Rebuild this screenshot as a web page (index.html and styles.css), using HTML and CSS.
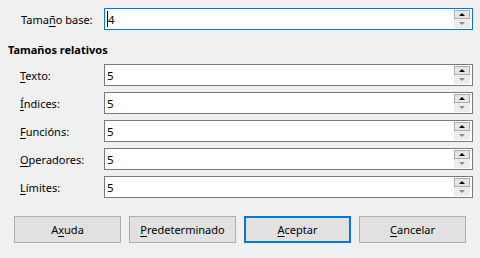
FILE: index.html
```html
<!DOCTYPE html>
<html lang="gl">
<head>
    <meta charset="UTF-8">
    <title>Tamaños de letra</title>
    <link rel="stylesheet" href="styles.css">
</head>
<body>
    <div class="dialog">
        <div class="field-row base-row">
            <label>Tama<u>ñ</u>o base:</label>
            <div class="spin focused">
                <span class="value"><span class="caret"></span>4</span>
                <div class="arrows">
                    <span class="arrow up"></span>
                    <span class="arrow down"></span>
                </div>
            </div>
        </div>

        <h2>Tamaños relativos</h2>

        <div class="rows">
            <div class="field-row">
                <label><u>T</u>exto:</label>
                <div class="spin">
                    <span class="value">5</span>
                    <div class="arrows"><span class="arrow up"></span><span class="arrow down"></span></div>
                </div>
            </div>
            <div class="field-row">
                <label><u>Í</u>ndices:</label>
                <div class="spin">
                    <span class="value">5</span>
                    <div class="arrows"><span class="arrow up"></span><span class="arrow down"></span></div>
                </div>
            </div>
            <div class="field-row">
                <label><u>F</u>uncións:</label>
                <div class="spin">
                    <span class="value">5</span>
                    <div class="arrows"><span class="arrow up"></span><span class="arrow down"></span></div>
                </div>
            </div>
            <div class="field-row">
                <label><u>O</u>peradores:</label>
                <div class="spin">
                    <span class="value">5</span>
                    <div class="arrows"><span class="arrow up"></span><span class="arrow down"></span></div>
                </div>
            </div>
            <div class="field-row">
                <label><u>L</u>ímites:</label>
                <div class="spin">
                    <span class="value">5</span>
                    <div class="arrows"><span class="arrow up"></span><span class="arrow down"></span></div>
                </div>
            </div>
        </div>

        <div class="buttons">
            <button>A<u>x</u>uda</button>
            <button><u>P</u>redeterminado</button>
            <button class="default"><u>A</u>ceptar</button>
            <button><u>C</u>ancelar</button>
        </div>
    </div>
</body>
</html>
```

FILE: styles.css
```css
body {
    margin: 0;
    background-color: #f0f0f0;
    color: #000;
    font-family: 'Noto Sans', 'DejaVu Sans', sans-serif;
    font-size: 11px;
}
.dialog {
    padding: 8px 7px 0 8px;
}
u {
    text-decoration-thickness: 1px;
    text-underline-offset: 2px;
}
h2 {
    margin: 12px 0 6px 0;
    font-size: 11px;
    line-height: 16px;
    font-weight: bold;
}
.rows {
    display: flex;
    flex-direction: column;
    gap: 6px;
}
.field-row {
    display: grid;
    grid-template-columns: 84px 1fr;
    align-items: center;
    padding-left: 12px;
}
.base-row label {
    padding-left: 1px;
}
.spin {
    display: flex;
    align-items: stretch;
    height: 22px;
    box-sizing: border-box;
    border: 1px solid #7a7a7a;
    background-color: #fff;
}
.spin.focused {
    border-color: #0078d7;
}
.value {
    flex: 1;
    display: flex;
    align-items: center;
    padding-left: 2px;
    font-size: 11.5px;
}
.caret {
    display: inline-block;
    width: 0;
    height: 16px;
    border-left: 1px solid #000;
}
.arrows {
    display: flex;
    flex-direction: column;
    width: 16px;
    margin: 1px 2px 1px 0;
}
.arrow {
    display: flex;
    justify-content: center;
    align-items: center;
    box-sizing: border-box;
}
.arrow.up {
    height: 9px;
    background-color: #e5e5e5;
    border: 1px solid #adadad;
}
.arrow.down {
    height: 9px;
    background-color: #ececec;
}
.arrow.up::after {
    content: '';
    border-left: 3px solid transparent;
    border-right: 3px solid transparent;
    border-bottom: 3px solid #000;
}
.arrow.down::after {
    content: '';
    border-left: 3px solid transparent;
    border-right: 3px solid transparent;
    border-top: 3px solid #8a8a8a;
}
.buttons {
    display: flex;
    gap: 8px;
    margin-top: 18px;
    padding-left: 6px;
}
button {
    width: 107px;
    height: 27px;
    padding: 0;
    font-family: inherit;
    font-size: 11px;
    color: #000;
    background-color: #e1e1e1;
    border: 1px solid #adadad;
}
button.default {
    border: 2px solid #0078d7;
}
```
